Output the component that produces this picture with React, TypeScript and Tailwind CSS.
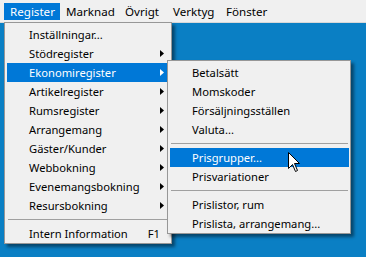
const mainItems: { label: string; sub?: boolean; active?: boolean }[] = [
  { label: "Inställningar..." },
  { label: "Stödregister", sub: true },
  { label: "Ekonomiregister", sub: true, active: true },
  { label: "Artikelregister", sub: true },
  { label: "Rumsregister", sub: true },
  { label: "Arrangemang", sub: true },
  { label: "Gäster/Kunder", sub: true },
  { label: "Webbokning", sub: true },
  { label: "Evenemangsbokning", sub: true },
  { label: "Resursbokning", sub: true },
];

const Arrow = ({ white }: { white?: boolean }) => (
  <svg width="4" height="7" viewBox="0 0 4 7">
    <polygon points="0,0 4,3.5 0,7" fill={white ? "#ffffff" : "#000000"} />
  </svg>
);

const Row = ({ label, active, children }: { label: string; active?: boolean; children?: React.ReactNode }) => (
  <div
    className={`h-[19px] flex items-center justify-between pl-[22px] pr-[5px] ${
      active ? "bg-[#0078d7] text-white" : "text-black"
    }`}
  >
    <span>{label}</span>
    {children}
  </div>
);

const Separator = () => (
  <div className="h-[9px] flex items-center px-[1px]">
    <div className="h-px w-full bg-[#a0a0a0]" />
  </div>
);

export default function App() {
  return (
    <div
      className="relative w-[366px] h-[257px] overflow-hidden bg-[#0a7fc4] text-[11.2px] leading-none"
      style={{ fontFamily: '"Noto Sans", "Liberation Sans", sans-serif' }}
    >
      {/* menu bar */}
      <div className="h-[23px] bg-[#f0f0f0] border-b border-[#d8d8d8] pt-[3px] pl-[4px] flex items-start text-[11.6px]">
        <div className="w-[56px] h-[17px] pl-[6px] flex items-center bg-[#0078d7] text-white">Register</div>
        <div className="w-[59px] h-[17px] pl-[6px] flex items-center">Marknad</div>
        <div className="w-[48px] h-[17px] pl-[6px] flex items-center">Övrigt</div>
        <div className="w-[53px] h-[17px] pl-[6px] flex items-center">Verktyg</div>
        <div className="h-[17px] pl-[6px] flex items-center">Fönster</div>
      </div>

      {/* Register dropdown */}
      <div className="absolute left-[4px] top-[22px] w-[168px] bg-[#f0f0f0] border border-[#979797] pt-[2px] px-[2px] shadow-[3px_3px_3px_rgba(0,0,0,0.45)]">
        {mainItems.map((it) => (
          <Row key={it.label} label={it.label} active={it.active}>
            {it.sub && <Arrow white={it.active} />}
          </Row>
        ))}
        <Separator />
        <div className="h-[19px] flex items-center justify-between pl-[22px] pr-[9px]">
          <span>Intern Information</span>
          <span>F1</span>
        </div>
      </div>

      {/* Ekonomiregister submenu */}
      <div className="absolute left-[167px] top-[60px] w-[184px] bg-[#f0f0f0] border border-[#979797] pt-[2px] pl-[2px] pr-[1px] shadow-[3px_3px_3px_rgba(0,0,0,0.45)]">
        <Row label="Betalsätt" />
        <Row label="Momskoder" />
        <Row label="Försäljningsställen" />
        <Row label="Valuta..." />
        <Separator />
        <Row label="Prisgrupper..." active />
        <Row label="Prisvariationer" />
        <Separator />
        <Row label="Prislistor, rum" />
        <Row label="Prislista, arrangemang..." />
      </div>

      {/* mouse cursor */}
      <svg className="absolute left-[288px] top-[152px]" width="13" height="21" viewBox="0 0 13 21">
        <path d="M0.5 0.5 L0.5 16.5 L4.5 12.5 L7.5 19.5 L9.5 18.5 L6.5 11.5 L11.5 11.5 Z" fill="#ffffff" stroke="#000000" strokeWidth="1" />
      </svg>
    </div>
  );
}
